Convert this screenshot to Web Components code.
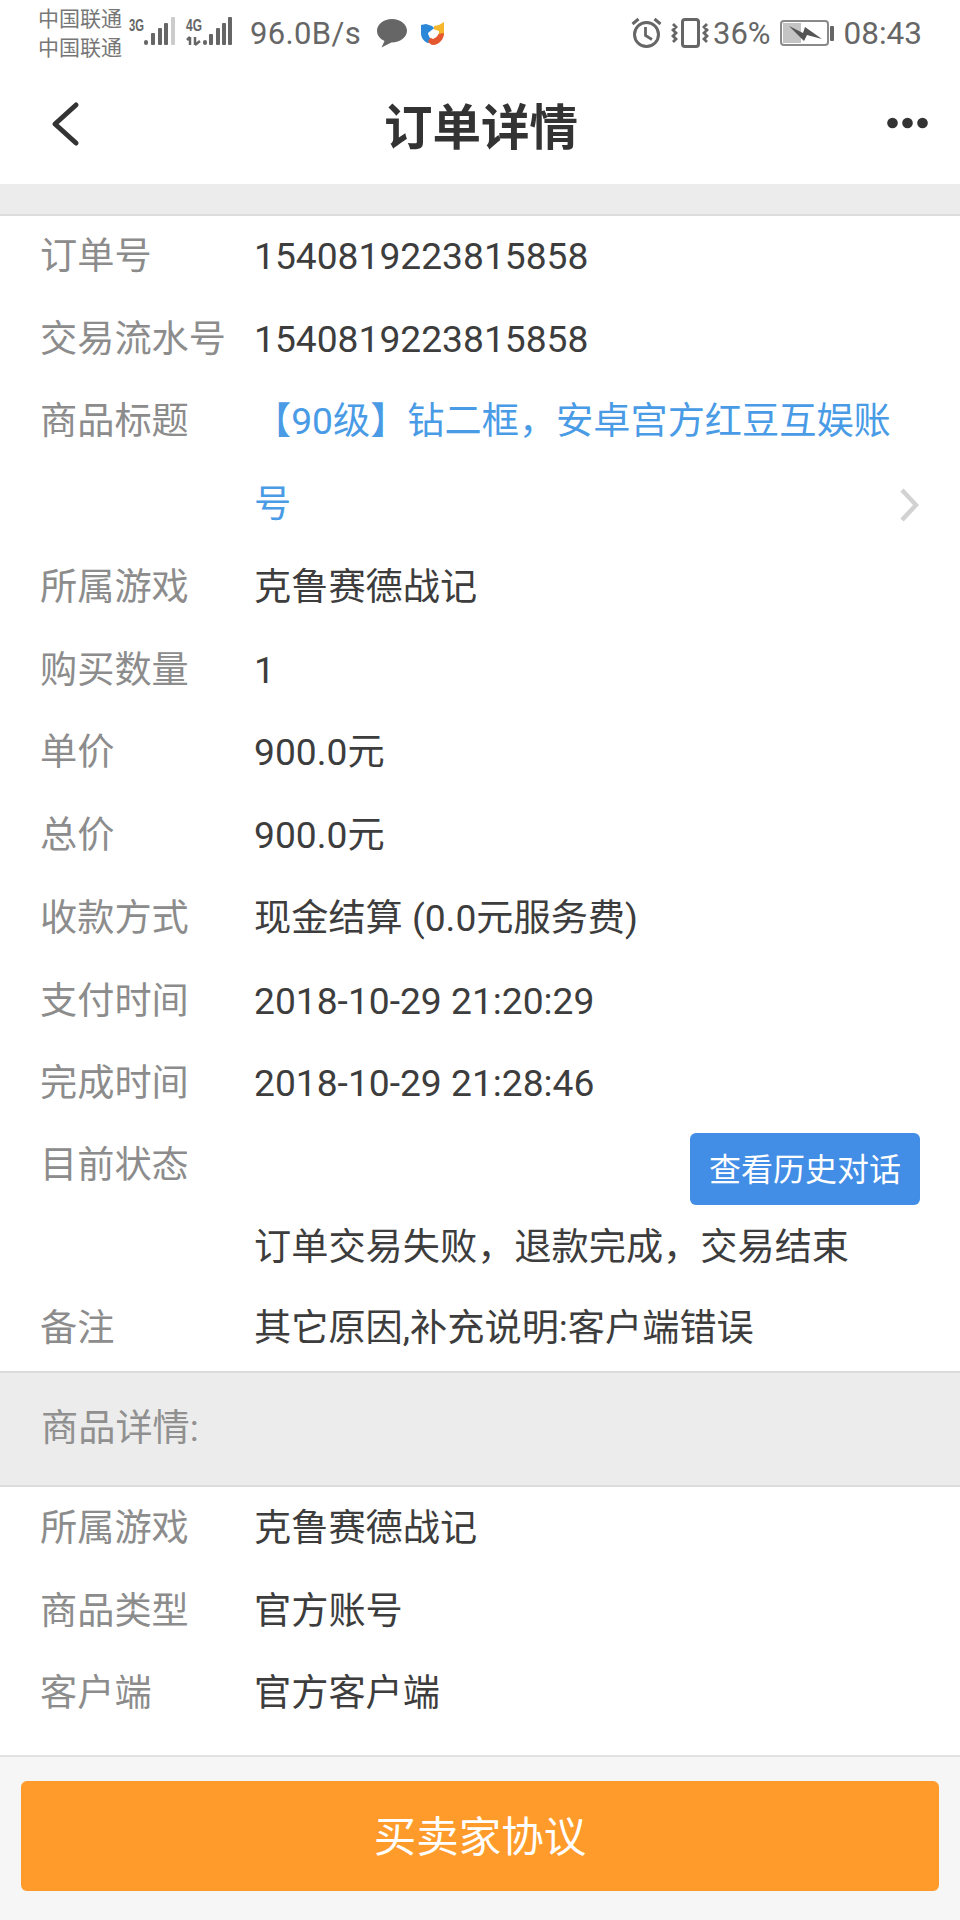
<!DOCTYPE html>
<html lang="zh-CN">
<head>
<meta charset="utf-8">
<title>订单详情</title>
<style>
  html, body { margin: 0; padding: 0; background: #fff; }
  body { width: 960px; height: 1920px; overflow: hidden; font-family: Roboto, "Noto Sans CJK SC", sans-serif; }
</style>
</head>
<body>
<order-page>
  <status-bar></status-bar>
  <nav-bar title="订单详情"></nav-bar>
  <section-gap></section-gap>
  <row-list>
    <order-row label="订单号">1540819223815858</order-row>
    <order-row label="交易流水号">1540819223815858</order-row>
    <order-row label="商品标题" tone="link">
      <title-lines first="【90级】钻二框，安卓宫方红豆互娱账" second="号"></title-lines>
    </order-row>
    <order-row label="所属游戏">克鲁赛德战记</order-row>
    <order-row label="购买数量">1</order-row>
    <order-row label="单价">900.0元</order-row>
    <order-row label="总价">900.0元</order-row>
    <order-row label="收款方式">现金结算 (0.0元服务费)</order-row>
    <order-row label="支付时间">2018-10-29 21:20:29</order-row>
    <order-row label="完成时间">2018-10-29 21:28:46</order-row>
    <order-row label="目前状态" tight>
      <status-lines action="查看历史对话">订单交易失败，退款完成，交易结束</status-lines>
    </order-row>
    <order-row label="备注" tight>其它原因,补充说明:客户端错误</order-row>
  </row-list>
  <section-gap label="商品详情:"></section-gap>
  <row-list class="last">
    <order-row label="所属游戏">克鲁赛德战记</order-row>
    <order-row label="商品类型">官方账号</order-row>
    <order-row label="客户端">官方客户端</order-row>
  </row-list>
  <page-footer action="买卖家协议"></page-footer>
</order-page>

<script>
class OrderPage extends HTMLElement {
  constructor() {
    super();
    this.attachShadow({ mode: "open" });
    this.shadowRoot.innerHTML = `
      <style>
        :host { display: flex; flex-direction: column; width: 960px; height: 1920px; background: #fff; }
      </style>
      <slot></slot>
    `;
  }
}
customElements.define("order-page", OrderPage);

class StatusBar extends HTMLElement {
  constructor() {
    super();
    this.attachShadow({ mode: "open" });
    this.shadowRoot.innerHTML = `
      <style>
        :host {
          display: flex;
          align-items: center;
          height: 66px;
          padding: 0 38px 0 38px;
          color: #666;
          background: #fff;
        }
        .carriers { font-size: 21px; line-height: 29px; color: #777; width: 90px; margin-top: 1px; }
        .carriers div { white-space: nowrap; }
        svg { display: block; flex: none; }
        .speed { font-size: 31px; margin-left: 14px; letter-spacing: .35px; }
        .spacer { flex: 1; }
        .pct { font-size: 31px; margin-left: 4px; }
        .time { font-size: 31.500px; margin-left: 9px; }
      </style>
      <div class="carriers"><div>中国联通</div><div>中国联通</div></div>
      <svg width="108" height="36" viewBox="0 0 108 36">
        <text x="1" y="16" font-family="'Liberation Sans',sans-serif" font-weight="700" font-size="16" fill="#666" textLength="15" lengthAdjust="spacingAndGlyphs">3G</text>
        <rect x="16" y="25" width="4" height="5" rx="2" fill="#666"/>
        <rect x="23" y="18" width="4" height="12" rx="1" fill="#666"/>
        <rect x="30" y="13" width="4" height="17" rx="1" fill="#666"/>
        <rect x="36" y="8" width="4" height="22" rx="1" fill="#666"/>
        <rect x="43" y="2" width="4" height="28" rx="1" fill="#ccc"/>
        <text x="58" y="16" font-family="'Liberation Sans',sans-serif" font-weight="700" font-size="16" fill="#666" textLength="16" lengthAdjust="spacingAndGlyphs">4G</text>
        <path d="M62 22v8M59 25l3-3M67 22v8M67 30l5-4" stroke="#666" stroke-width="2.500" fill="none"/>
        <rect x="75" y="25" width="4" height="5" rx="2" fill="#666"/>
        <rect x="81" y="19" width="4" height="11" rx="1" fill="#666"/>
        <rect x="88" y="13" width="4" height="17" rx="1" fill="#666"/>
        <rect x="94" y="8" width="4" height="22" rx="1" fill="#666"/>
        <rect x="100" y="2" width="4" height="28" rx="1" fill="#666"/>
      </svg>
      <span class="speed">96.0B/s</span>
      <svg width="32" height="31" viewBox="0 0 32 31" style="margin-left:15px">
        <path d="M16 1C7.700 1 1 6.200 1 12.800c0 4.400 3 8.200 7.500 10.200L5.500 29.500 15.300 24.500C24 24.600 31 19.300 31 12.800 31 6.200 24.300 1 16 1z" fill="#666"/>
      </svg>
      <svg width="24" height="23" viewBox="0 0 24 23" style="margin-left:13px">
        <path d="M13 4l5-1 5-3v11c0 2-1 4-2 5H13z" fill="#f6b72c"/>
        <path d="M0 3l5-1 6 2 2 2-5 8 3 6-4 1C2 19 0 15 0 11z" fill="#2b87d8"/>
        <path d="M7 19l5-6 11-2c0 6-5 12-11 12-2 0-4-2-5-4z" fill="#e4572f"/>
        <path d="M12 7l6 2c0 4-2 6-6 8-3-1-5-4-5-6z" fill="#fff"/>
      </svg>
      <div class="spacer"></div>
      <svg width="32" height="32" viewBox="0 0 32 32">
        <circle cx="15.500" cy="17.500" r="12" fill="none" stroke="#666" stroke-width="3"/>
        <path d="M14.500 10v8.500l6.500 4" fill="none" stroke="#666" stroke-width="2.800"/>
        <path d="M1.500 7l6-5M29.500 7l-6-5" stroke="#666" stroke-width="3" fill="none"/>
      </svg>
      <svg width="38" height="30" viewBox="0 0 38 30" style="margin-left:8px">
        <rect x="11.500" y="1.500" width="16" height="27" rx="2.500" fill="none" stroke="#666" stroke-width="3"/>
        <path d="M2 6l3 3-3 3 3 3-3 3 3 3-3 3M36 6l-3 3 3 3-3 3 3 3-3 3 3 3" fill="none" stroke="#666" stroke-width="2.800"/>
      </svg>
      <span class="pct">36%</span>
      <svg width="55" height="26" viewBox="0 0 55 26" style="margin-left:9px">
        <rect x="1" y="1" width="47" height="24" rx="3" fill="none" stroke="#8a8a8a" stroke-width="2"/>
        <rect x="3" y="3" width="18" height="20" fill="#c4c4c4"/>
        <path d="M9 6l14 7 2-6 17 12-15-4-3 6z" fill="#555"/>
        <rect x="50" y="6" width="4" height="15" rx="1" fill="#666"/>
      </svg>
      <span class="time">08:43</span>
    `;
  }
}
customElements.define("status-bar", StatusBar);

class NavBar extends HTMLElement {
  constructor() {
    super();
    this.attachShadow({ mode: "open" });
    this.shadowRoot.innerHTML = `
      <style>
        :host {
          display: flex;
          align-items: center;
          justify-content: space-between;
          height: 118px;
          padding: 0 32px 0 49px;
          background: #fff;
        }
        h1 {
          flex: 1;
          margin: 0;
          text-align: center;
          font-size: 48.500px;
          font-weight: 700;
          color: #333;
          font-family: Roboto, "Noto Sans CJK SC", sans-serif;
          margin-left: -6px;
          margin-top: -3px;
        }
        svg { display: block; flex: none; }
      </style>
      <svg width="32" height="46" viewBox="0 0 32 46" style="margin-top:-2px">
        <path d="M27 4L6 23l21 19" fill="none" stroke="#333" stroke-width="5" stroke-linecap="round" stroke-linejoin="round"/>
      </svg>
      <h1></h1>
      <svg width="41" height="12" viewBox="0 0 41 12" style="margin-top:-4px">
        <circle cx="5.500" cy="6" r="5.300" fill="#333"/>
        <circle cx="20.500" cy="6" r="5.300" fill="#333"/>
        <circle cx="35.500" cy="6" r="5.300" fill="#333"/>
      </svg>
    `;
    this.shadowRoot.querySelector("h1").textContent = this.getAttribute("title") || "";
  }
}
customElements.define("nav-bar", NavBar);

class SectionGap extends HTMLElement {
  constructor() {
    super();
    this.attachShadow({ mode: "open" });
    this.shadowRoot.innerHTML = `
      <style>
        :host {
          display: block;
          flex: none;
          background: #ececec;
          border-bottom: 2px solid #dcdcdc;
          font-size: 37.200px;
          color: #909090;
        }
        :host([label]) { border-top: 2px solid #dcdcdc; }
        div { box-sizing: border-box; height: 30px; padding-left: 41px; }
        :host([label]) div { height: 112px; line-height: 110px; }
      </style>
      <div></div>
    `;
    this.shadowRoot.querySelector("div").textContent = this.getAttribute("label") || "";
  }
}
customElements.define("section-gap", SectionGap);

class RowList extends HTMLElement {
  constructor() {
    super();
    this.attachShadow({ mode: "open" });
    this.shadowRoot.innerHTML = `
      <style>
        :host { display: block; flex: none; background: #fff; }
        :host(.last) { padding: 1px 0 19px; }
      </style>
      <slot></slot>
    `;
  }
}
customElements.define("row-list", RowList);

class OrderRow extends HTMLElement {
  constructor() {
    super();
    this.attachShadow({ mode: "open" });
    this.shadowRoot.innerHTML = `
      <style>
        :host {
          display: flex;
          align-items: flex-start;
          padding: 0 40px;
          font-size: 37.200px;
          line-height: 82.730px;
          color: #3d3d3d;
        }
        :host([tight]) { line-height: 81.600px; }
        .label, .value { margin: -1px 0 1px; }
        .label { flex: none; width: 214px; color: #8c8c8c; white-space: nowrap; }
        .value { flex: 1; min-width: 0; }
        :host([tone="link"]) .value { color: #4a9be6; }
      </style>
      <div class="label"></div>
      <div class="value"><slot></slot></div>
    `;
    this.shadowRoot.querySelector(".label").textContent = this.getAttribute("label") || "";
  }
}
customElements.define("order-row", OrderRow);

class TitleLines extends HTMLElement {
  constructor() {
    super();
    this.attachShadow({ mode: "open" });
    this.shadowRoot.innerHTML = `
      <style>
        :host { display: block; }
        .first { white-space: nowrap; }
        .second { display: flex; justify-content: space-between; align-items: center; }
        svg { display: block; margin-right: 1px; }
      </style>
      <div class="first"></div>
      <div class="second">
        <span></span>
        <svg width="20" height="34" viewBox="0 0 20 34">
          <path d="M3 2l14 15L3 32" fill="none" stroke="#d2d2d2" stroke-width="4.500"/>
        </svg>
      </div>
    `;
    this.shadowRoot.querySelector(".first").textContent = this.getAttribute("first") || "";
    this.shadowRoot.querySelector(".second span").textContent = this.getAttribute("second") || "";
  }
}
customElements.define("title-lines", TitleLines);

class StatusLines extends HTMLElement {
  constructor() {
    super();
    this.attachShadow({ mode: "open" });
    this.shadowRoot.innerHTML = `
      <style>
        :host { display: block; }
        .top { display: flex; justify-content: flex-end; align-items: flex-start; height: 81.600px; }
        button {
          width: 230px;
          height: 72px;
          margin-top: 8px;
          border: none;
          border-radius: 6px;
          padding: 0 0 4px;
          background: #428ee6;
          color: #fff;
          font: 400 32px Roboto, "Noto Sans CJK SC", sans-serif;
        }
      </style>
      <div class="top"><button></button></div>
      <div><slot></slot></div>
    `;
    this.shadowRoot.querySelector("button").textContent = this.getAttribute("action") || "";
  }
}
customElements.define("status-lines", StatusLines);

class PageFooter extends HTMLElement {
  constructor() {
    super();
    this.attachShadow({ mode: "open" });
    this.shadowRoot.innerHTML = `
      <style>
        :host {
          display: block;
          flex: 1;
          box-sizing: border-box;
          background: #f6f6f6;
          border-top: 2px solid #e2e2e2;
          padding: 24px 21px 0;
        }
        button {
          display: block;
          width: 100%;
          height: 110px;
          border: none;
          border-radius: 6px;
          padding: 0 0 5px;
          background: #ff9b2b;
          color: #fff;
          font: 400 42.500px Roboto, "Noto Sans CJK SC", sans-serif;
        }
      </style>
      <button></button>
    `;
    this.shadowRoot.querySelector("button").textContent = this.getAttribute("action") || "";
  }
}
customElements.define("page-footer", PageFooter);
</script>
</body>
</html>
